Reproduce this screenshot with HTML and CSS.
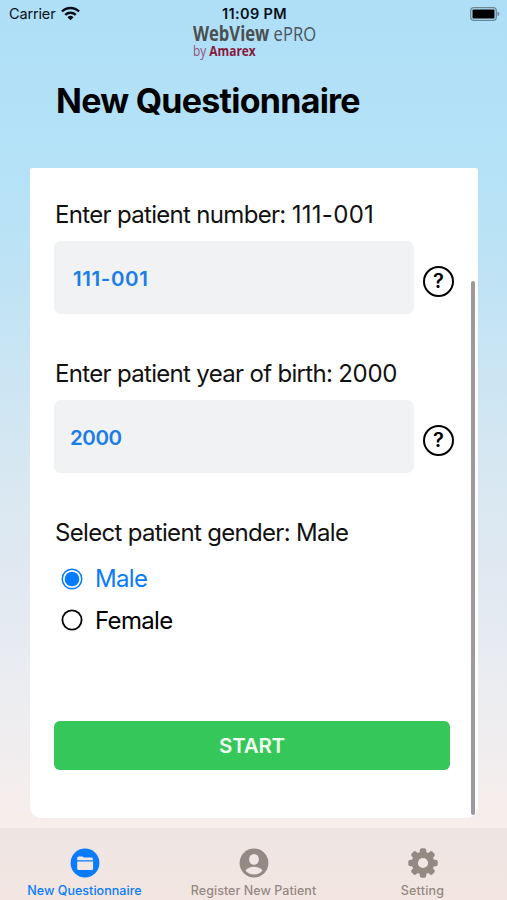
FILE: index.html
```html
<!DOCTYPE html>
<html lang="en">
<head>
<meta charset="utf-8">
<title>New Questionnaire</title>
<link rel="stylesheet" href="styles.css">
</head>
<body>
<div class="app">
  <header class="status">
    <div class="carrier"><span class="carrier-name">Carrier</span>
      <svg class="wifi" viewBox="0 0 18 14"><g fill="none" stroke="#071018" stroke-width="2.3"><path d="M.9 5.1a11.6 11.6 0 0 1 16.2 0"/><path d="M4 8.3a7.2 7.2 0 0 1 10 0"/></g><path fill="#071018" d="M6.1 10.6a4.2 4.2 0 0 1 5.8 0L9 13.5z"/></svg>
    </div>
    <span class="clock">11:09 PM</span>
    <svg class="battery" viewBox="0 0 30 14"><rect x=".7" y=".7" width="25.6" height="12.6" rx="3" fill="none" stroke="#6d8793" stroke-width="1.3"/><rect x="2.5" y="2.5" width="22" height="9" rx="1" fill="#000"/><path d="M27.500 4.800q2 .6 2 2.200t-2 2.200z" fill="#6d8793"/></svg>
  </header>
  <div class="logo">
    <div class="logo-main"><b>WebView</b> ePRO</div>
    <div class="logo-sub">by <b>Amarex</b></div>
  </div>
  <h1 class="title">New Questionnaire</h1>
  <main class="card">
    <section class="field">
      <div class="label">Enter patient number: <span class="number">111-001</span></div>
      <div class="row">
        <div class="input in1">111-001</div>
        <span class="help">?</span>
      </div>
    </section>
    <section class="field">
      <div class="label">Enter patient year of birth: <span class="year">2000</span></div>
      <div class="row">
        <div class="input in2">2000</div>
        <span class="help">?</span>
      </div>
    </section>
    <section class="gender">
      <div class="label">Select patient gender: Male</div>
      <div class="option selected"><svg class="radio" viewBox="0 0 22 22"><circle cx="11" cy="11" r="9.800" fill="none" stroke="currentColor" stroke-width="1.500"/><circle cx="11" cy="11" r="7.300" fill="currentColor"/></svg><span>Male</span></div>
      <div class="option"><svg class="radio" viewBox="0 0 22 22"><circle cx="11" cy="11" r="9.600" fill="none" stroke="currentColor" stroke-width="1.800"/></svg><span>Female</span></div>
    </section>
    <div class="start">START</div>
    <div class="scrollbar"></div>
  </main>
  <nav class="tabs">
    <div class="tab active">
      <svg class="icon" viewBox="0 0 30 30"><circle cx="15" cy="15" r="14.400" fill="currentColor"/><path fill="#f0e8e5" d="M7.200 12.200V9.900q0-1.500 1.500-1.500h3.800l1.300 1.200h7.700q1.400 0 1.400 1.400v1.200zM7.200 13.400h15.900v7q0 1.500-1.500 1.500H8.700q-1.500 0-1.500-1.500z"/></svg>
      <span>New Questionnaire</span>
    </div>
    <div class="tab">
      <svg class="icon" viewBox="0 0 30 30"><circle cx="15" cy="15" r="14.400" fill="currentColor"/><ellipse cx="15" cy="11.400" rx="4.900" ry="5.400" fill="#f0e6e3"/><path fill="#f0e6e3" d="M6.500 22.600c1.800-2.800 5-3.900 8.500-3.900s6.700 1.100 8.500 3.900c-2 2.500-5 4-8.500 4s-6.500-1.500-8.500-4z"/></svg>
      <span>Register New Patient</span>
    </div>
    <div class="tab">
      <svg class="icon gear" viewBox="-15 -15 30 30"><g fill="currentColor"><g id="teeth"><rect x="-3.200" y="-14.700" width="6.400" height="29.400" rx="2"/><rect x="-14.700" y="-3.200" width="29.400" height="6.400" rx="2"/></g><use href="#teeth" transform="rotate(45)"/><circle r="11.300"/></g><circle r="5.100" fill="#f0e6e3"/></svg>
      <span class="setting">Setting</span>
    </div>
  </nav>
</div>
</body>
</html>
```
FILE: styles.css
```css
* { box-sizing: border-box; }
body { margin: 0; font-family: Inter, "Liberation Sans", sans-serif; color: #000; }
.app { width: 507px; height: 900px; display: flex; flex-direction: column; overflow: hidden; white-space: nowrap;
  background: linear-gradient(180deg, #aedff7 0, #b5e2f7 170px, #bfe3f5 280px, #d5e7f2 450px, #e1e9f2 580px, #ededf0 710px, #f5eeed 800px, #f8eeea 828px); }
.status { height: 24px; display: grid; grid-template-columns: 1fr auto 1fr; align-items: center; padding: 3px 7px 0 9px; color: #071018; }
.carrier { display: flex; align-items: center; gap: 6px; font-size: 14.500px; line-height: 18px; letter-spacing: -.15px; }
.wifi { width: 19px; height: 15px; }
.clock { font-size: 14.500px; line-height: 18px; font-weight: 600; letter-spacing: .35px; }
.battery { width: 30px; height: 14px; justify-self: end; }
.logo { height: 39px; padding-left: 193px; font-family: "Open Sans", sans-serif; }
.logo-main, .logo-sub { width: max-content; transform-origin: 0 50%; }
.logo-main { font-size: 20.500px; line-height: 19px; color: #4b5660; transform: scaleX(.81); }
.logo-main b { color: #4a4f52; }
.logo-sub { font-size: 14.500px; line-height: 16px; color: #925079; transform: scaleX(.82); }
.logo-sub b { color: #87193b; }
.title { margin: 17px 0 0 56px; height: 88px; font-size: 34px; line-height: 42px; font-weight: 700; letter-spacing: -.75px; }
.card { position: relative; width: 448px; height: 650px; margin-left: 30px; padding: 30px 24px 0; background: #fff; border-radius: 2px 2px 12px 12px; display: flex; flex-direction: column; }
.field { height: 159px; }
.label { height: 43px; font-size: 24px; line-height: 33px; color: #111; padding-left: 1px; letter-spacing: -.68px; }
.number { letter-spacing: .3px; }
.year { letter-spacing: -.3px; }
.row { display: flex; align-items: center; gap: 9px; }
.input { flex: none; width: 360px; height: 73px; border-radius: 7px; background: #f0f2f4; color: #1a7de8; font-size: 20.500px; font-weight: 600; line-height: 75px; padding-left: 19px; letter-spacing: .6px; }
.in2 { padding-left: 16px; letter-spacing: -.4px; }
.help { width: 31px; height: 31px; margin-top: 8px; border: 2.500px solid #000; border-radius: 50%; text-align: center; font-size: 20px; font-weight: 600; line-height: 26px; flex: none; }
.gender { height: 205px; }
.gender .label { height: 42px; }
.option { display: flex; align-items: center; height: 41.500px; gap: 12px; padding-left: 7px; font-size: 24px; line-height: 40px; letter-spacing: -.65px; }
.option span { padding-top: 1px; }
.selected { color: #087bff; }
.radio { width: 22px; height: 22px; }
.start { height: 49px; width: 396px; border-radius: 6px; background: #35c759; color: #f1fff2; font-size: 20.500px; font-weight: 600; text-align: center; line-height: 49px; letter-spacing: -.2px; }
.scrollbar { position: absolute; right: 3px; top: 113px; width: 4px; height: 534px; border-radius: 2px; background: #9c9a9c; }
.tabs { margin-top: 10px; height: 72px; display: grid; grid-template-columns: repeat(3, 1fr); background: linear-gradient(#eee5e3, #f3e6e1); }
.tab { display: flex; flex-direction: column; align-items: center; padding-top: 20px; color: #958984; font-size: 12.500px; font-weight: 500; line-height: 16px; gap: 5px; letter-spacing: .05px; }
.active { color: #087bff; }
.icon { width: 30px; height: 30px; }
.setting { letter-spacing: .2px; }
```
